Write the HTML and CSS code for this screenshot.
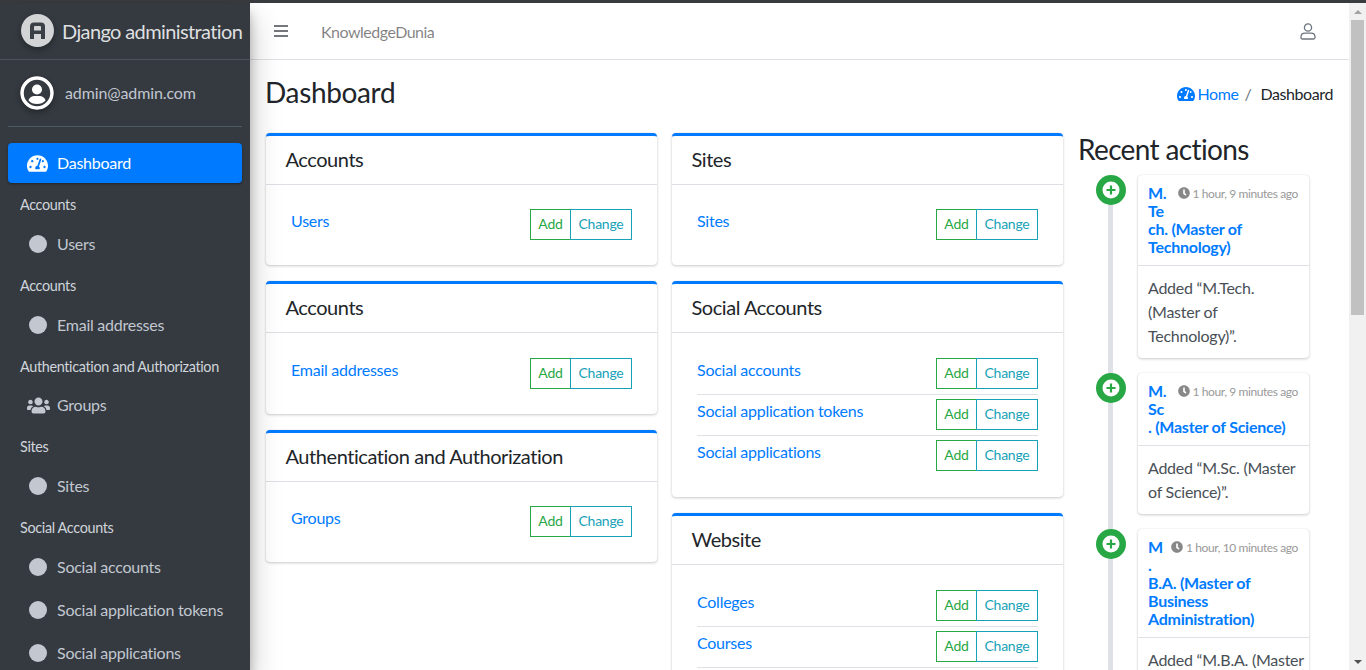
FILE: index.html
```html
<!DOCTYPE html>
<html lang="en">
<head>
    <meta charset="UTF-8">
    <meta name="viewport" content="width=device-width, initial-scale=1.0">
    <title>Dashboard | Django administration</title>
    <link rel="stylesheet" href="styles.css">
</head>
<body>
    <svg class="icon-defs" width="0" height="0">
        <symbol id="i-gauge" viewBox="0 0 576 512"><path d="M288 32C128.94 32 0 160.94 0 320c0 52.8 14.25 102.26 39.06 144.8 5.61 9.62 16.3 15.2 27.44 15.2h443c11.14 0 21.83-5.58 27.44-15.2C561.75 422.26 576 372.8 576 320c0-159.06-128.94-288-288-288zm0 64c14.71 0 26.58 10.13 30.32 23.65-1.11 2.26-2.64 4.23-3.45 6.67l-9.22 27.67c-5.13 3.49-10.97 6.01-17.64 6.01-17.67 0-32-14.33-32-32S270.33 96 288 96zM96 384c-17.67 0-32-14.33-32-32s14.33-32 32-32 32 14.33 32 32-14.33 32-32 32zm48-160c-17.67 0-32-14.33-32-32s14.33-32 32-32 32 14.33 32 32-14.33 32-32 32zm246.77-72.41l-61.33 184C343.13 347.33 352 364.54 352 384c0 11.72-3.38 22.55-8.88 32H232.88c-5.5-9.45-8.88-20.28-8.88-32 0-33.94 26.5-61.43 59.9-63.59l61.34-184.01c4.17-12.56 17.73-19.45 30.36-15.17 12.57 4.19 19.35 17.77 15.17 30.36zm14.66 57.2l15.52-46.55c3.47-1.29 7.13-2.23 11.05-2.23 17.67 0 32 14.33 32 32s-14.33 32-32 32c-11.38-.01-20.89-6.28-26.57-15.22zM480 384c-17.67 0-32-14.33-32-32s14.33-32 32-32 32 14.33 32 32-14.33 32-32 32z"/></symbol>
        <symbol id="i-users" viewBox="0 0 640 512"><path d="M96 224c35.3 0 64-28.7 64-64s-28.7-64-64-64-64 28.7-64 64 28.7 64 64 64zm448 0c35.3 0 64-28.7 64-64s-28.7-64-64-64-64 28.7-64 64 28.7 64 64 64zm32 32h-64c-17.6 0-33.5 7.1-45.1 18.6 40.3 22.1 68.9 62 75.1 109.4h66c17.7 0 32-14.3 32-32v-32c0-35.3-28.7-64-64-64zm-256 0c61.9 0 112-50.1 112-112S381.9 32 320 32 208 82.1 208 144s50.1 112 112 112zm76.8 32h-8.3c-20.8 10-43.9 16-68.5 16s-47.6-6-68.5-16h-8.3C179.6 288 128 339.6 128 403.2V432c0 26.5 21.5 48 48 48h288c26.5 0 48-21.5 48-48v-28.8c0-63.6-51.6-115.2-115.2-115.2zm-223.7-13.4C161.5 263.1 145.6 256 128 256H64c-35.3 0-64 28.7-64 64v32c0 17.7 14.3 32 32 32h65.9c6.3-47.4 34.9-87.3 75.2-109.4z"/></symbol>
        <symbol id="i-clock" viewBox="0 0 512 512"><path d="M256 8C119 8 8 119 8 256s111 248 248 248 248-111 248-248S393 8 256 8zm57 350-88-64c-3-2-5-6-5-10V116c0-7 5-12 12-12h48c7 0 12 5 12 12v142l63 46c5 4 6 11 3 17l-28 38c-4 5-11 6-17 3z"/></symbol>
        <symbol id="i-plus" viewBox="0 0 30 30"><circle cx="15" cy="15" r="15" fill="#28a745"/><circle cx="15" cy="15" r="8.5" fill="#fff"/><path d="M15 10.5v9M10.5 15h9" stroke="#28a745" stroke-width="2.2" fill="none"/></symbol>
    </svg>

    <div class="top-strip"></div>

    <div class="app">
        <aside class="sidebar">
            <div class="brand">
                <span class="brand-logo">
                    <svg viewBox="0 0 33 33" width="33" height="33">
                        <circle cx="16.5" cy="16.5" r="16.5" fill="#d3d4d6"/>
                        <path d="M9 25V12.500Q9 8.500 13 8.500H20Q24 8.500 24 12.500V25H20V20H13V25ZM13 16.500H20V13Q20 12 19 12H14Q13 12 13 13Z" fill="#3b3f46" fill-rule="evenodd"/>
                    </svg>
                </span>
                <span class="brand-text">Django administration</span>
            </div>

            <div class="user-panel">
                <svg class="avatar" viewBox="0 0 34 34" width="34" height="34">
                    <circle cx="17" cy="17" r="15" fill="#343a40" stroke="#fff" stroke-width="3.5"/>
                    <circle cx="17" cy="13.500" r="5" fill="#fff"/>
                    <path d="M8.500 24.500C9.500 21 12.500 20 14.500 20H19.500C21.500 20 24.500 21 25.500 24.500C23.500 27 20.500 28 17 28C13.500 28 10.500 27 8.500 24.500Z" fill="#fff"/>
                </svg>
                <span class="user-name">admin@admin.com</span>
            </div>

            <nav class="side-nav">
                <a class="side-link active" href="#">
                    <svg class="side-icon gauge"><use href="#i-gauge"/></svg>
                    Dashboard
                </a>
                <div class="side-header">Accounts</div>
                <a class="side-link" href="#"><span class="dot"></span>Users</a>
                <div class="side-header">Accounts</div>
                <a class="side-link" href="#"><span class="dot"></span>Email addresses</a>
                <div class="side-header">Authentication and Authorization</div>
                <a class="side-link" href="#"><svg class="side-icon groups"><use href="#i-users"/></svg>Groups</a>
                <div class="side-header">Sites</div>
                <a class="side-link" href="#"><span class="dot"></span>Sites</a>
                <div class="side-header">Social Accounts</div>
                <a class="side-link spaced" href="#"><span class="dot"></span>Social accounts</a>
                <a class="side-link spaced" href="#"><span class="dot"></span>Social application tokens</a>
                <a class="side-link spaced" href="#"><span class="dot"></span>Social applications</a>
            </nav>
        </aside>

        <div class="main">
            <header class="navbar">
                <a class="burger" href="#"><span></span><span></span><span></span></a>
                <a class="nav-title" href="#">KnowledgeDunia</a>
                <a class="nav-user" href="#">
                    <svg viewBox="0 0 16 17" width="16" height="17" fill="none" stroke="#6c757d" stroke-width="1.3">
                        <circle cx="8" cy="4.500" r="3.600"/>
                        <path d="M1 14C1 11.500 3 10.200 5 10.200H11C13 10.200 15 11.500 15 14V14.500C15 15.500 14.500 16 13.500 16H2.500C1.500 16 1 15.500 1 14.500Z"/>
                    </svg>
                </a>
            </header>

            <div class="page-head">
                <h1>Dashboard</h1>
                <ol class="breadcrumb">
                    <li><a href="#"><svg class="crumb-icon"><use href="#i-gauge"/></svg> Home</a></li>
                    <li class="crumb-sep">/</li>
                    <li>Dashboard</li>
                </ol>
            </div>

            <div class="content">
                <div class="card-col">
                    <section class="card">
                        <h5 class="card-title">Accounts</h5>
                        <div class="card-body">
                            <div class="model-row"><a href="#">Users</a><span class="btns"><a class="btn add" href="#">Add</a><a class="btn change" href="#">Change</a></span></div>
                        </div>
                    </section>
                    <section class="card">
                        <h5 class="card-title">Accounts</h5>
                        <div class="card-body">
                            <div class="model-row"><a href="#">Email addresses</a><span class="btns"><a class="btn add" href="#">Add</a><a class="btn change" href="#">Change</a></span></div>
                        </div>
                    </section>
                    <section class="card">
                        <h5 class="card-title">Authentication and Authorization</h5>
                        <div class="card-body">
                            <div class="model-row"><a href="#">Groups</a><span class="btns"><a class="btn add" href="#">Add</a><a class="btn change" href="#">Change</a></span></div>
                        </div>
                    </section>
                </div>

                <div class="card-col">
                    <section class="card">
                        <h5 class="card-title">Sites</h5>
                        <div class="card-body">
                            <div class="model-row"><a href="#">Sites</a><span class="btns"><a class="btn add" href="#">Add</a><a class="btn change" href="#">Change</a></span></div>
                        </div>
                    </section>
                    <section class="card">
                        <h5 class="card-title">Social Accounts</h5>
                        <div class="card-body">
                            <div class="model-row"><a href="#">Social accounts</a><span class="btns"><a class="btn add" href="#">Add</a><a class="btn change" href="#">Change</a></span></div>
                            <div class="model-row"><a href="#">Social application tokens</a><span class="btns"><a class="btn add" href="#">Add</a><a class="btn change" href="#">Change</a></span></div>
                            <div class="model-row"><a href="#">Social applications</a><span class="btns"><a class="btn add" href="#">Add</a><a class="btn change" href="#">Change</a></span></div>
                        </div>
                    </section>
                    <section class="card">
                        <h5 class="card-title">Website</h5>
                        <div class="card-body">
                            <div class="model-row"><a href="#">Colleges</a><span class="btns"><a class="btn add" href="#">Add</a><a class="btn change" href="#">Change</a></span></div>
                            <div class="model-row"><a href="#">Courses</a><span class="btns"><a class="btn add" href="#">Add</a><a class="btn change" href="#">Change</a></span></div>
                            <div class="model-row"></div>
                        </div>
                    </section>
                </div>

                <div class="recent">
                    <h3>Recent actions</h3>
                    <div class="timeline">
                        <div class="tl-item">
                            <svg class="tl-icon"><use href="#i-plus"/></svg>
                            <div class="tl-card">
                                <div class="tl-head">
                                    <span class="tl-time"><svg class="clock"><use href="#i-clock"/></svg> 1 hour, 9 minutes ago</span>
                                    <a href="#">M.<br>Te<br>ch. (Master of Technology)</a>
                                </div>
                                <div class="tl-body">Added “M.Tech. (Master of Technology)”.</div>
                            </div>
                        </div>
                        <div class="tl-item">
                            <svg class="tl-icon"><use href="#i-plus"/></svg>
                            <div class="tl-card">
                                <div class="tl-head">
                                    <span class="tl-time"><svg class="clock"><use href="#i-clock"/></svg> 1 hour, 9 minutes ago</span>
                                    <a href="#">M.<br>Sc<br>. (Master of Science)</a>
                                </div>
                                <div class="tl-body">Added “M.Sc. (Master of Science)”.</div>
                            </div>
                        </div>
                        <div class="tl-item">
                            <svg class="tl-icon"><use href="#i-plus"/></svg>
                            <div class="tl-card">
                                <div class="tl-head">
                                    <span class="tl-time"><svg class="clock"><use href="#i-clock"/></svg> 1 hour, 10 minutes ago</span>
                                    <a href="#">M<br>.<br>B.A. (Master of Business Administration)</a>
                                </div>
                                <div class="tl-body">Added “M.B.A. (Master of Business Administration)”.</div>
                            </div>
                        </div>
                    </div>
                </div>
            </div>
        </div>

        <div class="scrollbar">
            <span class="arrow up"></span>
            <span class="thumb"></span>
            <span class="arrow down"></span>
        </div>
    </div>
</body>
</html>
```

FILE: styles.css
```css
* {
    box-sizing: border-box;
}

html, body {
    height: 670px;
    margin: 0;
    overflow: hidden;
}

body {
    font-family: Lato, "Noto Sans", sans-serif;
    font-size: 16px;
    line-height: 24px;
    letter-spacing: -.25px;
    color: #212529;
    background-color: #fff;
    display: flex;
    flex-direction: column;
}

a {
    color: #007bff;
    text-decoration: none;
}

.icon-defs {
    position: absolute;
}

.top-strip {
    height: 3px;
    flex: none;
    background-color: #3a3b3f;
}

.app {
    flex: 1;
    min-height: 0;
    display: flex;
}

/* sidebar */
.sidebar {
    width: 250px;
    flex: none;
    background-color: #343a40;
    color: #c2c7d0;
    box-shadow: 0 14px 28px rgba(0, 0, 0, .25), 0 10px 10px rgba(0, 0, 0, .22);
    overflow: hidden;
    position: relative;
}

.brand {
    height: 57px;
    display: flex;
    align-items: center;
    padding: 0 0 1px 21px;
    border-bottom: 1px solid #4b545c;
    white-space: nowrap;
}

.brand-logo {
    width: 33px;
    height: 33px;
    border-radius: 50%;
    box-shadow: 0 3px 6px rgba(0, 0, 0, .3);
    display: block;
}

.brand-logo svg, .avatar {
    display: block;
}

.brand-text {
    margin-left: 8px;
    font-size: 20px;
    letter-spacing: -.62px;
    color: rgba(255, 255, 255, .85);
}

.user-panel {
    height: 67px;
    margin: 0 8px;
    padding-left: 12px;
    display: flex;
    align-items: center;
    border-bottom: 1px solid #4f5962;
}

.avatar {
    border-radius: 50%;
    box-shadow: 0 3px 6px rgba(0, 0, 0, .3);
}

.user-name {
    margin-left: 11px;
    letter-spacing: -.12px;
}

.side-nav {
    padding: 16px 8px 0;
}

.side-link {
    height: 40px;
    display: flex;
    align-items: center;
    padding-left: 12px;
    border-radius: 4px;
    color: #c2c7d0;
    white-space: nowrap;
}

.side-link.spaced {
    margin-bottom: 3px;
}

.side-link.active {
    background-color: #007bff;
    color: #fff;
    box-shadow: 0 1px 3px rgba(0, 0, 0, .12), 0 1px 2px rgba(0, 0, 0, .24);
}

.side-icon {
    fill: currentColor;
    flex: none;
    margin-right: 9px;
}

.gauge {
    width: 21px;
    height: 19px;
    margin-left: 7px;
    color: #fff;
}

.groups {
    width: 23px;
    height: 19px;
    margin-left: 7px;
    margin-right: 7px;
}

.dot {
    width: 18px;
    height: 18px;
    margin: 0 10px 0 9px;
    flex: none;
    border-radius: 50%;
    background-color: #c2c7d0;
}

.side-header {
    height: 40.75px;
    padding: 11px 4px 0 12px;
    font-size: 14.4px;
    line-height: 22px;
    letter-spacing: -.34px;
    color: #d0d4db;
    white-space: nowrap;
}

/* navbar */
.main {
    flex: 1;
    min-width: 0;
    overflow: hidden;
}

.navbar {
    height: 57px;
    display: flex;
    align-items: center;
    padding: 0 33px 0 24px;
    border-bottom: 1px solid #dee2e6;
}

.burger {
    width: 14px;
    display: flex;
    flex-direction: column;
    gap: 3px;
}

.burger span {
    height: 2px;
    background-color: #74787c;
}

.nav-title {
    margin-left: 33px;
    padding-top: 1px;
    letter-spacing: -.5px;
    color: rgba(0, 0, 0, .5);
}

.nav-user {
    margin-left: auto;
    display: flex;
}

/* page header */
.page-head {
    display: flex;
    align-items: flex-start;
    justify-content: space-between;
    padding: 15px 16px 0 15px;
    height: 73px;
}

.page-head h1 {
    margin: 0;
    font-size: 28px;
    font-weight: 400;
    line-height: 34px;
    letter-spacing: -.35px;
}

.breadcrumb {
    display: flex;
    margin: 7px 0 0;
    padding: 0;
    list-style: none;
    letter-spacing: -.4px;
}

.crumb-sep {
    margin: 0 9px 0 6px;
    color: #6c757d;
}

.crumb-icon {
    width: 18px;
    height: 16px;
    margin-right: -1px;
    fill: currentColor;
    vertical-align: -2px;
}

/* cards */
.content {
    display: flex;
    align-items: flex-start;
    padding: 0 0 0 16px;
}

.card-col {
    width: 391px;
    flex: none;
    margin-right: 15px;
    display: flex;
    flex-direction: column;
    gap: 16px;
}

.card {
    background-color: #fff;
    border-top: 3px solid #007bff;
    border-radius: 4px;
    box-shadow: 0 0 1px rgba(0, 0, 0, .125), 0 1px 3px rgba(0, 0, 0, .2);
}

.card-title {
    margin: 0;
    height: 49px;
    padding: 10px 19.5px;
    font-size: 20px;
    font-weight: 400;
    line-height: 26px;
    letter-spacing: -.44px;
    border-bottom: 1px solid #dcdfe3;
}

.card-body {
    padding: 20.4px 25px 25px;
}

.model-row {
    height: 41px;
    display: flex;
    justify-content: space-between;
    padding: 4px 0 0 0;
    border-top: 1px solid #dee2e6;
}

.model-row:first-child {
    height: 40.5px;
    border-top: none;
}

.model-row:last-child {
    height: 37px;
}

.model-row:only-child {
    height: 35px;
}

.btns {
    display: flex;
    height: 31px;
    font-size: 14px;
    line-height: 28px;
}

.btn {
    border: 1px solid;
    text-align: center;
}

.btn.add {
    width: 41px;
    color: #28a745;
    border-color: #28a745;
}

.btn.change {
    width: 62px;
    margin-left: -1px;
    color: #17a2b8;
    border-color: #17a2b8;
}

/* recent actions */
.recent {
    width: 271px;
    flex: none;
}

.recent h3 {
    margin: -2px 0 7.5px;
    font-size: 28px;
    font-weight: 400;
    line-height: 36px;
    letter-spacing: -.64px;
}

.timeline {
    position: relative;
    margin-left: 30px;
}

.timeline::before {
    content: "";
    position: absolute;
    left: 0;
    top: 4px;
    bottom: 0;
    width: 5px;
    background-color: #dee2e6;
}

.tl-item {
    position: relative;
    margin-bottom: 15px;
    padding-left: 30px;
}

.tl-icon {
    position: absolute;
    left: -12px;
    top: 0;
    width: 30px;
    height: 30px;
}

.tl-card {
    width: 171px;
    background-color: #fff;
    border-radius: 4px;
    box-shadow: 0 0 1px rgba(0, 0, 0, .125), 0 1px 3px rgba(0, 0, 0, .2);
}

.tl-head {
    padding: 9px 10px;
    font-weight: 700;
    line-height: 18px;
    border-bottom: 1px solid #dee2e6;
}

.tl-time {
    float: right;
    margin: 1px 1px 0 0;
    font-size: 12px;
    font-weight: 400;
    letter-spacing: -.4px;
    color: #999;
}

.clock {
    width: 12px;
    height: 12px;
    fill: #888;
    vertical-align: -1px;
}

.tl-body {
    padding: 10px 0 10px 10px;
    color: #495057;
}

/* scrollbar */
.scrollbar {
    width: 17px;
    flex: none;
    background-color: #f1f1f1;
    display: flex;
    flex-direction: column;
    align-items: center;
}

.arrow {
    height: 17px;
    flex: none;
    display: flex;
    align-items: center;
}

.arrow::before {
    content: "";
    border-left: 4px solid transparent;
    border-right: 4px solid transparent;
}

.arrow.up::before {
    border-bottom: 4px solid #a3a3a3;
}

.arrow.down {
    margin-top: auto;
}

.arrow.down::before {
    border-top: 4px solid #505050;
}

.thumb {
    width: 13px;
    height: 295px;
    background-color: #c1c1c1;
}
```
